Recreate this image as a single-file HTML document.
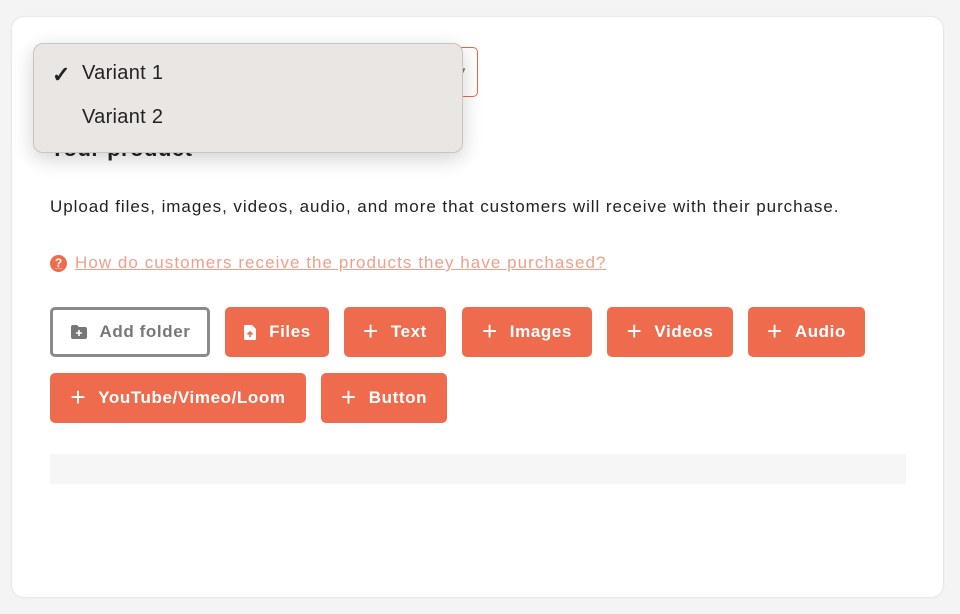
<!DOCTYPE html>
<html><head><style>
*{box-sizing:border-box;margin:0;padding:0}
body{width:960px;height:614px;background:#f4f4f4;font-family:"Liberation Sans",sans-serif;position:relative;overflow:hidden;color:#222}
.card{position:absolute;left:12px;top:17px;width:931px;height:580px;background:#fff;border-radius:12px;box-shadow:0 0 2px rgba(0,0,0,.15)}
.sel{position:absolute;left:40px;top:47px;width:438px;height:50px;border:1px solid #e8684a;border-radius:5px}
.dd{position:absolute;left:33px;top:43px;width:430px;height:110px;background:#e9e6e3;border:1px solid #c8c4c0;border-radius:10px;box-shadow:0 6px 20px rgba(0,0,0,.18);font-size:20px;color:#222;letter-spacing:.3px}
.dd div{position:absolute;left:48px}
h2{position:absolute;left:50px;top:136px;font-size:22px;font-weight:bold;letter-spacing:.5px}
p{position:absolute;left:50px;top:197px;font-size:17px;color:#222;letter-spacing:.95px;white-space:nowrap}
.lk{position:absolute;left:50px;top:253px;font-size:17px;color:#f0a08a;text-decoration:underline;display:flex;align-items:center;letter-spacing:1.05px;white-space:nowrap}
.q{width:17px;height:17px;border-radius:50%;background:#ee6c4d;color:#fff;font-size:12px;font-weight:bold;display:inline-flex;align-items:center;justify-content:center;margin-right:8px;text-decoration:none;letter-spacing:0}
.b{position:absolute;height:50px;border-radius:5px;background:#ee6c4d;color:#fff;font-size:17px;font-weight:bold;display:flex;align-items:center;justify-content:center;gap:12px;letter-spacing:.6px;white-space:nowrap}
.b .p{font-size:26px;font-weight:normal;line-height:1;margin-top:-3px}
.af{background:#fff;border:3px solid #8a8a8a;color:#777}
.bar{position:absolute;left:50px;top:454px;width:856px;height:30px;background:#f6f6f6}
</style></head><body>
<div class="card"></div>
<div class="sel"><span style="position:absolute;right:10px;top:18px;font-size:8px;color:#777">▼</span></div>
<h2>Your product</h2>
<div class="dd">
<div style="left:18px;top:18px;font-size:22px;font-weight:bold">✓</div>
<div style="top:18px">Variant 1</div>
<div style="top:62px">Variant 2</div>
</div>
<p>Upload files, images, videos, audio, and more that customers will receive with their purchase.</p>
<div class="lk"><span class="q">?</span>How do customers receive the products they have purchased?</div>
<div class="b af" style="left:50px;top:307px;width:160px"><svg width="18" height="16" viewBox="0 0 18 16"><path d="M1 3a2 2 0 0 1 2-2h4l2 2h6a2 2 0 0 1 2 2v8a2 2 0 0 1-2 2H3a2 2 0 0 1-2-2z" fill="#777"/><path d="M9 6v6M6 9h6" stroke="#fff" stroke-width="1.6"/></svg>Add folder</div>
<div class="b" style="left:225px;top:307px;width:104px"><svg width="14" height="17" viewBox="0 0 14 17"><path d="M1 2a1 1 0 0 1 1-1h7l4 4v10a1 1 0 0 1-1 1H2a1 1 0 0 1-1-1z" fill="#fff"/><path d="M7 13V8M4.5 10.5L7 8l2.5 2.5" stroke="#ee6c4d" stroke-width="1.6" fill="none"/></svg>Files</div>
<div class="b" style="left:344px;top:307px;width:102px"><span class="p">+</span>Text</div>
<div class="b" style="left:462px;top:307px;width:130px"><span class="p">+</span>Images</div>
<div class="b" style="left:607px;top:307px;width:126px"><span class="p">+</span>Videos</div>
<div class="b" style="left:748px;top:307px;width:117px"><span class="p">+</span>Audio</div>
<div class="b" style="left:50px;top:373px;width:256px"><span class="p">+</span>YouTube/Vimeo/Loom</div>
<div class="b" style="left:321px;top:373px;width:126px"><span class="p">+</span>Button</div>
<div class="bar"></div>
</body></html>
